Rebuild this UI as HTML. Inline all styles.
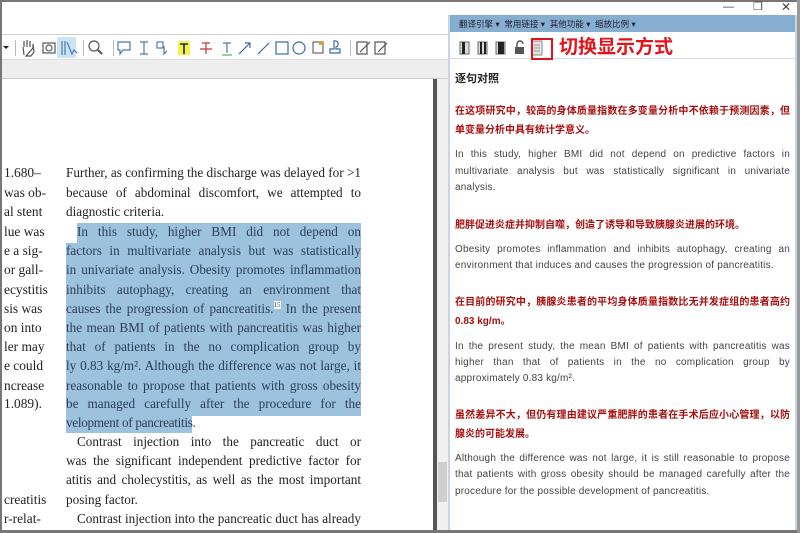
<!DOCTYPE html>
<html><head><meta charset="utf-8">
<style>
*{margin:0;padding:0;box-sizing:border-box}
body{width:800px;height:533px;overflow:hidden;background:#fff;position:relative;font-family:"Liberation Sans","Noto Sans CJK SC",sans-serif}
.a{position:absolute}
.s{position:absolute;font-family:"Liberation Serif","Noto Serif CJK SC",serif;font-size:13.4px;color:#222;white-space:nowrap;line-height:16px}
.j{position:absolute;left:66px;width:295px;text-align:justify;text-align-last:justify;height:17px;overflow:hidden;font-family:"Liberation Serif",serif;font-size:13.2px;line-height:16px;color:#222}
.j sup{line-height:0;font-size:7px;vertical-align:6px;background:#fff;color:#2c3e55}
.h{color:#2c3e55}
.hl{position:absolute;background:#9cc2de}
.zh{position:absolute;left:455px;width:335px;text-align:justify;text-align-last:justify;height:16px;overflow:hidden;font-size:10px;line-height:16px;color:#a80f0f;font-weight:bold;font-family:"Liberation Sans","Noto Sans CJK SC",sans-serif}
.en{position:absolute;left:455px;width:335px;text-align:justify;text-align-last:justify;height:16px;overflow:hidden;font-size:10px;line-height:16px;color:#444;letter-spacing:0.2px}
.nl{text-align-last:left}
</style></head><body>
<div class="a" style="left:0;top:0;width:800px;height:2px;background:#777"></div>
<div class="a" style="left:0;top:0;width:2px;height:533px;background:#777"></div>
<div class="a" style="left:0;top:530px;width:800px;height:3px;background:#777"></div>
<div class="a" style="left:797px;top:0;width:3px;height:533px;background:#999"></div>

<div class="a" style="left:2px;top:34px;width:446px;height:1px;background:#d0d0d0"></div>
<div class="a" style="left:2px;top:59px;width:446px;height:1px;background:#ddd"></div>
<div class="a" style="left:2px;top:60px;width:446px;height:18px;background:#eeeeee"></div>
<div class="a" style="left:2px;top:78px;width:446px;height:1px;background:#ccc"></div>
<div class="a" style="left:3px;top:46px;width:0;height:0;border-left:3px solid transparent;border-right:3px solid transparent;border-top:3px solid #222"></div>
<div class="a" style="left:15px;top:40px;width:1px;height:16px;background:#bbb"></div>
<div class="a" style="left:57px;top:37px;width:19px;height:21px;background:#cde4f7;border-radius:2px"></div>
<div class="a" style="left:83px;top:40px;width:1px;height:16px;background:#bbb"></div>
<div class="a" style="left:113px;top:40px;width:1px;height:16px;background:#bbb"></div>
<div class="a" style="left:350px;top:40px;width:1px;height:16px;background:#bbb"></div>
<svg class="a" style="left:20px;top:38px" width="370" height="20" viewBox="0 0 370 20" fill="none" stroke-width="1.2">
 <path d="M4 17 L3 9 M4 9 V3 M7 9 V2 M10 9 V3 M13 10 V6 L14 14 L11 18 H6 Z" stroke="#555"/>
 <rect x="23" y="5" width="12" height="10" stroke="#555"/><circle cx="29" cy="10" r="3" stroke="#555"/>
 <path d="M42 3 V17 M45 3 V17 M47 4 L52 16 L54 12 L57 15" stroke="#4a7bb0"/>
 <circle cx="74" cy="8" r="5" stroke="#555"/><path d="M78 12 L82 16" stroke="#555" stroke-width="2"/>
 <path d="M98 4 H110 V12 H103 L100 16 V12 H98 Z" stroke="#4a7bb0"/>
 <path d="M120 4 H128 M124 4 V16 M120 16 H128" stroke="#4a7bb0"/>
 <rect x="137" y="4" width="6" height="6" stroke="#4a7bb0"/><path d="M144 8 V16 L147 13" stroke="#4a7bb0"/>
 <rect x="158" y="3" width="12" height="14" fill="#f5f04a" stroke="none"/><path d="M160 6 H168 M164 6 V16" stroke="#226" stroke-width="1.6"/>
 <path d="M182 5 H190 M186 5 V16 M180 11 H192" stroke="#c33"/>
 <path d="M203 5 H211 M207 5 V15" stroke="#4a7bb0"/><path d="M202 17 H212" stroke="#6a6"/>
 <path d="M219 16 L230 5 M225 5 H230 V10" stroke="#3a6aa0"/>
 <path d="M238 16 L249 5" stroke="#3a6aa0"/>
 <rect x="256" y="4" width="12" height="12" stroke="#3a6aa0"/>
 <circle cx="279" cy="10" r="6" stroke="#3a6aa0"/>
 <rect x="293" y="4" width="10" height="11" stroke="#666"/><rect x="299" y="3" width="4" height="4" fill="#e0a030" stroke="none"/>
 <path d="M314 3 A3 3 0 1 1 316 9 V11 H320 V15 H310 V11 H314 Z" stroke="#3a6aa0"/>
 <rect x="337" y="4" width="10" height="12" stroke="#555"/><path d="M340 14 L350 4" stroke="#555"/>
 <rect x="355" y="4" width="10" height="12" stroke="#555"/><path d="M358 14 L367 5" stroke="#555"/>
</svg>

<div class="hl" style="left:77px;top:223px;width:284px;height:20px"></div>
<div class="hl" style="left:66px;top:243px;width:295px;height:156px"></div>
<div class="hl" style="left:66px;top:399px;width:295px;height:17px"></div>
<div class="hl" style="left:66px;top:416px;width:126px;height:17px"></div>

<div class="s" style="left:4px;top:165px">1.680–</div>
<div class="s" style="left:4px;top:185px">was ob-</div>
<div class="s" style="left:4px;top:204px">al stent</div>
<div class="s" style="left:4px;top:224px">lue was</div>
<div class="s" style="left:4px;top:243px">e a sig-</div>
<div class="s" style="left:4px;top:262px">or gall-</div>
<div class="s" style="left:4px;top:282px">ecystitis</div>
<div class="s" style="left:4px;top:301px">sis was</div>
<div class="s" style="left:4px;top:320px">on into</div>
<div class="s" style="left:4px;top:339px">ler may</div>
<div class="s" style="left:4px;top:358px">e could</div>
<div class="s" style="left:4px;top:378px">ncrease</div>
<div class="s" style="left:4px;top:396px">1.089).</div>
<div class="s" style="left:4px;top:492px">creatitis</div>
<div class="s" style="left:4px;top:511px">r-relat-</div>

<div class="j" style="top:165px">Further, as confirming the discharge was delayed for &gt;1 day</div>
<div class="j" style="top:185px">because of abdominal discomfort, we attempted to meet the</div>
<div class="j nl" style="top:204px">diagnostic criteria.</div>
<div class="j h" style="top:224px;left:77px;width:284px">In this study, higher BMI did not depend on predictive</div>
<div class="j h" style="top:243px">factors in multivariate analysis but was statistically significant</div>
<div class="j h" style="top:262px">in univariate analysis. Obesity promotes inflammation and</div>
<div class="j h" style="top:282px">inhibits autophagy, creating an environment that induces and</div>
<div class="j h" style="top:301px">causes the progression of pancreatitis.<sup>15</sup> In the present study,</div>
<div class="j h" style="top:320px">the mean BMI of patients with pancreatitis was higher than</div>
<div class="j h" style="top:339px">that of patients in the no complication group by approximate-</div>
<div class="j h" style="top:358px">ly 0.83 kg/m². Although the difference was not large, it is still</div>
<div class="j h" style="top:378px">reasonable to propose that patients with gross obesity should</div>
<div class="j h" style="top:396px">be managed carefully after the procedure for the possible de-</div>
<div class="j h nl" style="top:415px;letter-spacing:-0.3px">velopment of pancreatitis.</div>
<div class="j" style="top:434px;left:77px;width:284px">Contrast injection into the pancreatic duct or gallbladder</div>
<div class="j" style="top:453px">was the significant independent predictive factor for pancre-</div>
<div class="j" style="top:472px">atitis and cholecystitis, as well as the most important predis-</div>
<div class="j nl" style="top:492px">posing factor.</div>
<div class="j" style="top:511px;left:77px;width:284px">Contrast injection into the pancreatic duct has already been</div>

<div class="a" style="left:433px;top:79px;width:4px;height:451px;background:#555"></div>
<div class="a" style="left:437px;top:79px;width:11px;height:451px;background:#f0f0f0"></div>
<div class="a" style="left:438px;top:462px;width:9px;height:40px;background:#cfcfcf"></div>
<div class="a" style="left:448px;top:15px;width:2px;height:515px;background:#c8d4ea"></div>

<div class="a" style="left:795px;top:15px;width:2px;height:515px;background:#c8d4ea"></div>
<div class="a" style="left:723px;top:1px;font-size:11px;color:#444">—</div>
<div class="a" style="left:753px;top:0px;font-size:11px;color:#444">❐</div>
<div class="a" style="left:781px;top:0px;font-size:12px;color:#444">✕</div>
<div class="a" style="left:450px;top:15px;width:345px;height:17px;background:#86aed0"></div>
<div class="a" style="left:459px;top:18px;font-size:8.5px;color:#223;white-space:nowrap">翻译引擎 ▾ &nbsp;常用链接 ▾ &nbsp;其他功能 ▾ &nbsp;缩放比例 ▾</div>
<div class="a" style="left:450px;top:58px;width:345px;height:1px;background:#d0d8e8"></div>
<svg class="a" style="left:458px;top:38px" width="90" height="20" viewBox="0 0 90 20">
 <rect x="2" y="4" width="9" height="12" fill="#ddd" stroke="#666"/><rect x="4" y="4" width="3" height="12" fill="#222"/>
 <rect x="20" y="4" width="9" height="12" fill="#ddd" stroke="#666"/><rect x="22" y="4" width="2" height="12" fill="#222"/><rect x="26" y="4" width="2" height="12" fill="#222"/>
 <rect x="38" y="4" width="9" height="12" fill="#ddd" stroke="#666"/><rect x="40" y="4" width="6" height="12" fill="#222"/>
 <rect x="57" y="9" width="9" height="7" fill="#555"/><path d="M59 9 V6 A3 3 0 0 1 65 6" fill="none" stroke="#555" stroke-width="1.5"/>
 <rect x="74" y="3" width="10" height="14" fill="#e4e4e4" stroke="#888"/><path d="M76 7 H82 M76 10 H82 M76 13 H82" stroke="#999"/>
</svg>
<div class="a" style="left:531px;top:38px;width:22px;height:22px;border:2px solid #e0151b"></div>
<div class="a" style="left:559px;top:36px;font-size:19px;font-weight:bold;color:#e0151b;white-space:nowrap;line-height:24px">切换显示方式</div>

<div class="a" style="left:455px;top:70px;font-size:11px;font-weight:bold;color:#222">逐句对照</div>

<div class="zh" style="top:104px">在这项研究中，较高的身体质量指数在多变量分析中不依赖于预测因素，但在</div>
<div class="zh nl" style="top:123px">单变量分析中具有统计学意义。</div>
<div class="en" style="top:147px">In this study, higher BMI did not depend on predictive factors in</div>
<div class="en" style="top:164px">multivariate analysis but was statistically significant in univariate</div>
<div class="en nl" style="top:180px">analysis.</div>
<div class="zh nl" style="top:218px">肥胖促进炎症并抑制自噬，创造了诱导和导致胰腺炎进展的环境。</div>
<div class="en" style="top:242px">Obesity promotes inflammation and inhibits autophagy, creating an</div>
<div class="en nl" style="top:258px">environment that induces and causes the progression of pancreatitis.</div>
<div class="zh" style="top:295px">在目前的研究中，胰腺炎患者的平均身体质量指数比无并发症组的患者高约</div>
<div class="zh nl" style="top:314px">0.83 kg/m。</div>
<div class="en" style="top:339px">In the present study, the mean BMI of patients with pancreatitis was</div>
<div class="en" style="top:355px">higher than that of patients in the no complication group by</div>
<div class="en nl" style="top:371px">approximately 0.83 kg/m².</div>
<div class="zh" style="top:408px">虽然差异不大，但仍有理由建议严重肥胖的患者在手术后应小心管理，以防胰</div>
<div class="zh nl" style="top:427px">腺炎的可能发展。</div>
<div class="en" style="top:451px">Although the difference was not large, it is still reasonable to propose</div>
<div class="en" style="top:467px">that patients with gross obesity should be managed carefully after the</div>
<div class="en nl" style="top:484px">procedure for the possible development of pancreatitis.</div>
</body></html>
